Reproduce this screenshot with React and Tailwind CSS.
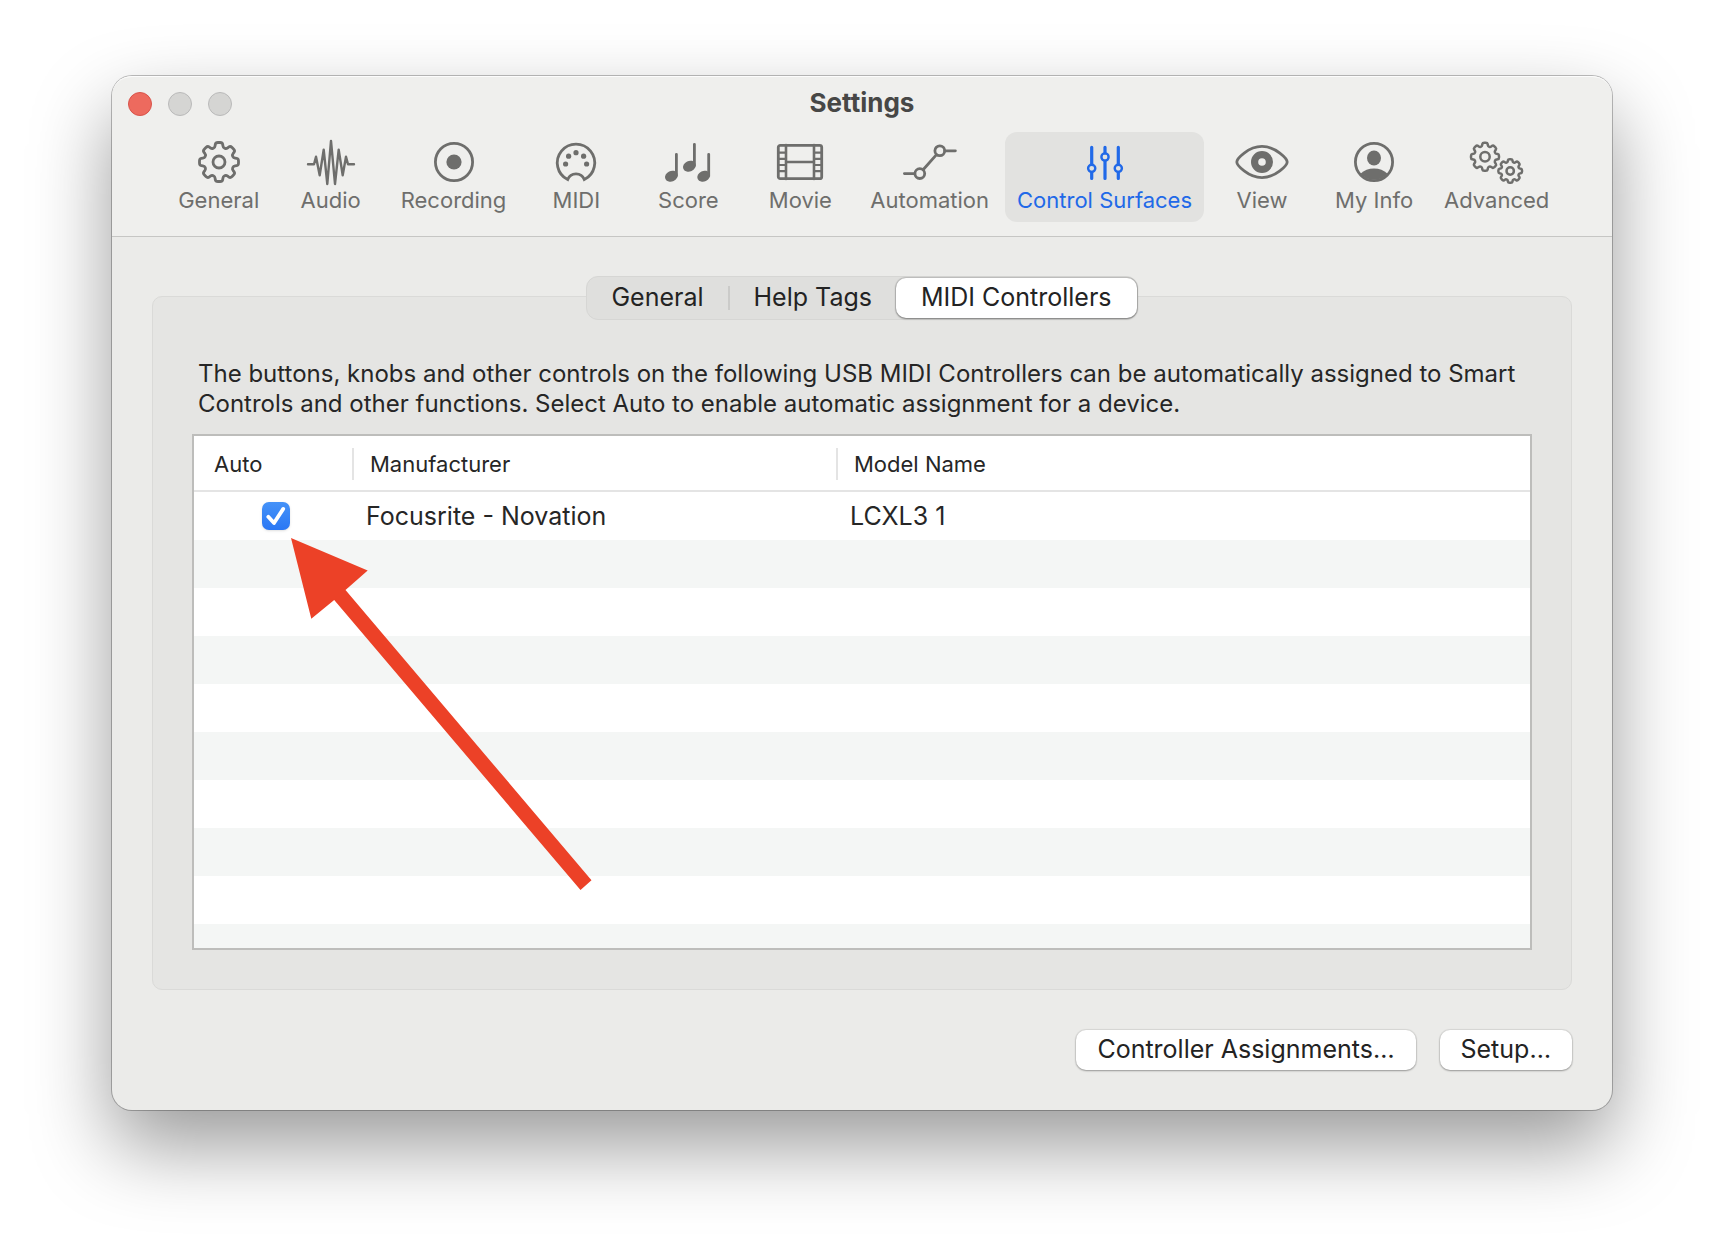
import { useState } from "react";

// Closed gear outline with softened corners, one tooth pointing up
const gearPath = (cx, cy, outer, inner, teeth = 8) => {
    const step = (Math.PI * 2) / teeth;
    const points = [];
    for (let i = 0; i < teeth; i++) {
        const a = i * step - Math.PI / 2;
        [
            [-0.36, inner],
            [-0.22, outer],
            [0.22, outer],
            [0.36, inner],
        ].forEach(([offset, r]) => {
            points.push([
                cx + r * Math.cos(a + offset * step),
                cy + r * Math.sin(a + offset * step),
            ]);
        });
    }
    const mix = (p, q, t) =>
        `${(p[0] + (q[0] - p[0]) * t).toFixed(2)} ${(p[1] + (q[1] - p[1]) * t).toFixed(2)}`;

    return (
        points
            .map((p, i) => {
                const prev = points[(i + points.length - 1) % points.length];
                const next = points[(i + 1) % points.length];
                return `${i === 0 ? "M" : "L"}${mix(p, prev, 0.35)} Q${mix(p, p, 0)} ${mix(p, next, 0.35)}`;
            })
            .join(" ") + "Z"
    );
};

const icons = {
    gear: (
        <>
            <path d={gearPath(28, 22, 19.8, 15)} />
            <circle cx="28" cy="22" r="6" />
        </>
    ),
    audio: (
        <path
            strokeWidth="2.4"
            d="M5 24.3H11L13 16.7L16.7 35.3L20.7 9.7L24.3 44L28 .9L32 44L35.7 9.7L39.7 35.3L43 16.7L45 24.3H51"
        />
    ),
    recording: (
        <>
            <circle cx="28" cy="22" r="18.6" />
            <circle cx="28" cy="22" r="7.6" fill="currentColor" stroke="none" />
        </>
    ),
    midi: (
        <>
            <path
                strokeLinejoin="miter"
                d="M19.7 39.6A18.7 18.7 0 1 1 36.3 39.6A8.9 8.9 0 0 0 19.7 39.6Z"
            />
            <g fill="currentColor" stroke="none">
                <circle cx="28" cy="12.7" r="2.6" />
                <circle cx="20.6" cy="16.2" r="2.6" />
                <circle cx="35.6" cy="16.2" r="2.6" />
                <circle cx="17.6" cy="24" r="2.6" />
                <circle cx="38.6" cy="24" r="2.6" />
            </g>
        </>
    ),
    score: (
        <>
            <path d="M16.4 14.3V35M34.4 4.3V25M48.7 14.3V35" />
            <g fill="currentColor" stroke="none">
                <ellipse cx="11.4" cy="36.2" rx="6.6" ry="5.3" transform="rotate(-25 11.4 36.2)" />
                <ellipse cx="29.4" cy="26.2" rx="6.6" ry="5.3" transform="rotate(-25 29.4 26.2)" />
                <ellipse cx="43.7" cy="36.2" rx="6.6" ry="5.3" transform="rotate(-25 43.7 36.2)" />
            </g>
        </>
    ),
    movie: (
        <>
            <rect x="6.3" y="5.3" width="43.4" height="33.4" rx="2" />
            <path d="M14 5V39M42 5V39M14 22H42" strokeWidth="2.6" />
            <path
                strokeWidth="2.2"
                d="M6 12.6H14M6 18.8H14M6 25H14M6 31.2H14M42 12.6H50M42 18.8H50M42 25H50M42 31.2H50"
            />
        </>
    ),
    automation: (
        <>
            <circle cx="17.8" cy="33.6" r="4.9" />
            <circle cx="37.8" cy="10.8" r="4.9" />
            <path d="M2.4 33.6H12.8M42.8 10.8H53.4M21.1 29.8L34.5 14.6" />
        </>
    ),
    faders: (
        <>
            <path
                strokeWidth="3.2"
                d="M14.7 7.3V24.3M14.7 32.3V38.4M28 7.3V13M28 21V38.4M41.3 7.3V24.3M41.3 32.3V38.4"
            />
            <g strokeWidth="2.4">
                <circle cx="14.7" cy="28.3" r="3.6" />
                <circle cx="28" cy="17" r="3.6" />
                <circle cx="41.3" cy="28.3" r="3.6" />
            </g>
        </>
    ),
    eye: (
        <>
            <path d="M2.8 22C2.8 19 14 6.4 28 6.4S53.2 19 53.2 22S42 37.6 28 37.6S2.8 25 2.8 22Z" />
            <circle cx="28" cy="22" r="7.4" strokeWidth="7.2" />
        </>
    ),
    person: (
        <>
            <circle cx="28" cy="22" r="18.6" />
            <g fill="currentColor" stroke="none">
                <ellipse cx="28" cy="18" rx="7" ry="7.4" />
                <path d="M14.4 33.8Q20 28.6 28 28.6T41.6 33.8A18.7 18.7 0 0 1 14.4 33.8Z" />
            </g>
        </>
    ),
    gears: (
        <g strokeWidth="2.5">
            <path d={gearPath(16, 16.7, 14.2, 10.9)} />
            <circle cx="16" cy="16.7" r="4.7" />
            <path d={gearPath(41.2, 31, 12, 9.2)} />
            <circle cx="41.2" cy="31" r="3.7" />
        </g>
    ),
};

const toolbarItems = [
    { label: "General", icon: "gear" },
    { label: "Audio", icon: "audio" },
    { label: "Recording", icon: "recording" },
    { label: "MIDI", icon: "midi" },
    { label: "Score", icon: "score" },
    { label: "Movie", icon: "movie" },
    { label: "Automation", icon: "automation" },
    { label: "Control Surfaces", icon: "faders" },
    { label: "View", icon: "eye" },
    { label: "My Info", icon: "person" },
    { label: "Advanced", icon: "gears" },
];

const tabs = ["General", "Help Tags", "MIDI Controllers"];

const columns = ["Auto", "Manufacturer", "Model Name"];

const ToolbarButton = ({ item, selected, onClick }) => (
    <button
        type="button"
        onClick={onClick}
        aria-pressed={selected}
        className={`flex h-[90px] min-w-[108px] flex-col items-center gap-1 rounded-xl px-3 pt-2 ${
            selected ? "bg-[#e2e2e0] text-[#2169e8]" : "text-[#6e6e6c]"
        }`}
    >
        <svg
            viewBox="0 0 56 44"
            className="h-11 w-14 overflow-visible"
            fill="none"
            stroke="currentColor"
            strokeWidth="2.8"
            strokeLinecap="round"
            strokeLinejoin="round"
            aria-hidden="true"
        >
            {icons[item.icon]}
        </svg>
        <span className="text-[22px] leading-6 whitespace-nowrap">{item.label}</span>
    </button>
);

const DeviceTable = () => {
    const [auto, setAuto] = useState(true);

    return (
        <div className="relative border-2 border-[#bdbdbb] bg-white">
            <table className="w-full table-fixed border-separate border-spacing-0 text-left text-[#262626]">
                <colgroup>
                    <col className="w-40" />
                    <col className="w-[484px]" />
                    <col />
                </colgroup>
                <thead>
                    <tr className="h-14">
                        {columns.map((column, i) => (
                            <th
                                key={column}
                                scope="col"
                                className="border-b-2 border-[#e4e4e4] p-0 pt-0.5 text-[22px] font-normal"
                            >
                                <div
                                    className={`flex h-8 items-center ${i === 0 ? "pl-5" : "pl-4"} ${
                                        i < columns.length - 1 ? "border-r-2 border-[#e4e4e4]" : ""
                                    }`}
                                >
                                    {column}
                                </div>
                            </th>
                        ))}
                    </tr>
                </thead>
                <tbody>
                    <tr className="h-12 text-[25px]">
                        <td className="p-0">
                            <div className="relative ml-17 size-7">
                                <input
                                    type="checkbox"
                                    checked={auto}
                                    onChange={(e) => setAuto(e.target.checked)}
                                    aria-label="Auto assign Focusrite - Novation LCXL3 1"
                                    className="peer block size-7 appearance-none rounded-[7px] border border-gray-300 bg-white shadow-sm checked:border-0 checked:bg-linear-to-b checked:from-[#4592f8] checked:to-[#2a77f4]"
                                />
                                <svg
                                    viewBox="0 0 28 28"
                                    className="pointer-events-none absolute inset-0 hidden size-7 peer-checked:block"
                                    fill="none"
                                    stroke="white"
                                    strokeWidth="3.8"
                                    strokeLinecap="round"
                                    strokeLinejoin="round"
                                    aria-hidden="true"
                                >
                                    <path d="M6.3 14.8L12 21L21.2 6.9" />
                                </svg>
                            </div>
                        </td>
                        <td className="p-0 pt-0.5 pl-3">Focusrite - Novation</td>
                        <td className="p-0 pt-0.5 pl-3">LCXL3 1</td>
                    </tr>
                </tbody>
            </table>

            {/* Empty striped rows below the devices */}
            <div aria-hidden="true">
                {[...Array(8)].map((_, i) => (
                    <div key={i} className="h-12 odd:bg-[#f4f6f5]" />
                ))}
                <div className="h-6 bg-[#f4f6f5]" />
            </div>

            <svg
                viewBox="0 0 301 353"
                className="pointer-events-none absolute top-[102px] left-[97px] h-[353px] w-[301px]"
                aria-hidden="true"
            >
                <path
                    fill="#ec4127"
                    d="M0 0L76.7 32.4L54.5 52L300.5 342.3L289.5 352L43.2 62L20.3 80.7Z"
                />
            </svg>
        </div>
    );
};

const App = () => {
    const [activeItem, setActiveItem] = useState("Control Surfaces");
    const [activeTab, setActiveTab] = useState("MIDI Controllers");

    return (
        <div className="min-h-screen bg-white px-28 pt-19 pb-37 font-['Inter','Liberation_Sans',sans-serif]">
            <main className="rounded-[20px] bg-[#ebebe9] shadow-[0_0_0_1px_rgba(0,0,0,0.25),0_36px_80px_rgba(0,0,0,0.4)]">
                <header className="rounded-t-[20px] border-b border-[#c6c6c4] bg-[#efefed] pb-3.5 shadow-[inset_0_2px_0_-1px_rgba(255,255,255,0.8)]">
                    <div className="grid h-14 grid-cols-[1fr_auto_1fr] items-center px-4">
                        <div className="flex gap-4">
                            <button
                                type="button"
                                aria-label="Close"
                                className="size-6 rounded-full border border-[#d9534a] bg-[#ed6a5e]"
                            />
                            <button
                                type="button"
                                aria-label="Minimize"
                                disabled
                                className="size-6 rounded-full border border-[#bababa] bg-[#d5d5d3]"
                            />
                            <button
                                type="button"
                                aria-label="Zoom"
                                disabled
                                className="size-6 rounded-full border border-[#bababa] bg-[#d5d5d3]"
                            />
                        </div>
                        <h1 className="pb-0.5 text-[26px] leading-8 font-bold text-[#474746]">Settings</h1>
                    </div>
                    <nav className="flex justify-center gap-1 pl-0.5">
                        {toolbarItems.map((item) => (
                            <ToolbarButton
                                key={item.label}
                                item={item}
                                selected={item.label === activeItem}
                                onClick={() => setActiveItem(item.label)}
                            />
                        ))}
                    </nav>
                </header>

                <div className="px-10 pt-[39px] pb-10">
                    <div className="relative z-10 flex justify-center">
                        <div
                            role="tablist"
                            className="flex h-11 items-center rounded-xl border border-[#d6d6d4] bg-[#dfdfdd] text-[25px] text-[#232323]"
                        >
                            {tabs.map((tab, i) => (
                                <button
                                    key={tab}
                                    type="button"
                                    role="tab"
                                    aria-selected={tab === activeTab}
                                    onClick={() => setActiveTab(tab)}
                                    className={
                                        tab === activeTab
                                            ? "h-10 rounded-[10px] bg-white px-[25px] pb-0.5 leading-6 shadow-[0_0_1px_1px_rgba(0,0,0,0.15),0_1px_2px_rgba(0,0,0,0.35)]"
                                            : `h-6 px-6 pb-0.5 leading-[22px] ${i === 0 ? "border-r-2 border-[#cbcbc9]" : ""}`
                                    }
                                >
                                    {tab}
                                </button>
                            ))}
                        </div>
                    </div>

                    <section className="-mt-6 rounded-[10px] border border-[#dadad8] bg-[#e5e5e3] px-[39px] pt-[62px] pb-[39px]">
                        <p className="mb-[15px] pl-1.5 text-2xl leading-[30px] text-[#262626]">
                            The buttons, knobs and other controls on the following USB MIDI Controllers can be
                            automatically assigned to Smart Controls and other functions. Select Auto to enable
                            automatic assignment for a device.
                        </p>
                        <DeviceTable />
                    </section>

                    <div className="mt-10 flex justify-end gap-6 text-[25px] text-[#232323]">
                        <button
                            type="button"
                            className="h-10 rounded-[10px] bg-white px-[21px] pb-0.5 leading-9 shadow-[0_0_1px_1px_rgba(0,0,0,0.08),0_1px_2px_rgba(0,0,0,0.3)]"
                        >
                            Controller Assignments…
                        </button>
                        <button
                            type="button"
                            className="h-10 rounded-[10px] bg-white px-[21px] pb-0.5 leading-9 shadow-[0_0_1px_1px_rgba(0,0,0,0.08),0_1px_2px_rgba(0,0,0,0.3)]"
                        >
                            Setup…
                        </button>
                    </div>
                </div>
            </main>
        </div>
    );
};

export default App;
